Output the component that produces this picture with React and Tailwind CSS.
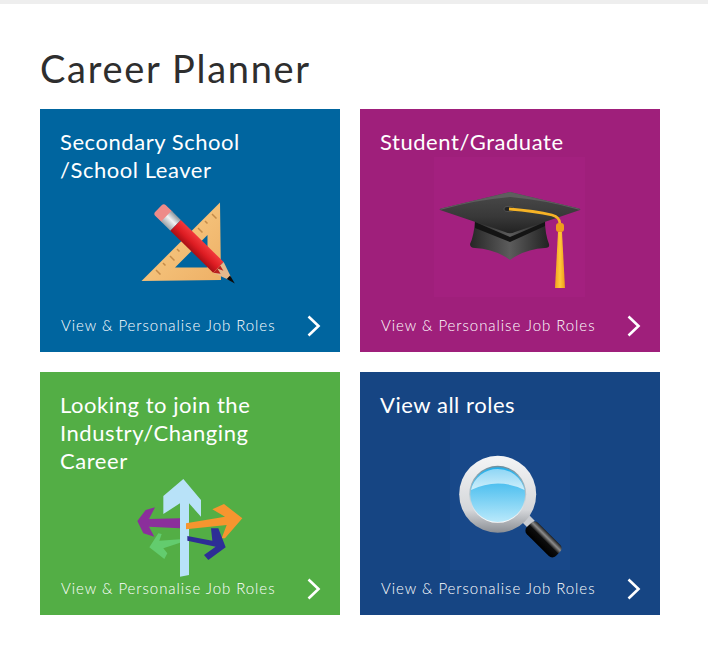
const TICKS = [0, 1, 2, 3, 4, 5, 6, 7, 8];

function PencilIcon() {
  return (
    <svg width="120" height="100" viewBox="0 0 120 100" className="shrink-0 mt-[6px]">
      <defs>
        <linearGradient id="ruler" x1="0" y1="0" x2="1" y2="1">
          <stop offset="0" stopColor="#f9d08a" />
          <stop offset="1" stopColor="#eeb066" />
        </linearGradient>
        <linearGradient id="ferrule" x1="0" y1="0" x2="0" y2="1">
          <stop offset="0" stopColor="#8f959b" />
          <stop offset="0.45" stopColor="#f2f3f4" />
          <stop offset="1" stopColor="#9aa0a5" />
        </linearGradient>
        <linearGradient id="pencilRed" x1="0" y1="0" x2="0" y2="1">
          <stop offset="0" stopColor="#f2393c" />
          <stop offset="0.55" stopColor="#dd1c22" />
          <stop offset="1" stopColor="#a80f16" />
        </linearGradient>
      </defs>
      <path
        fillRule="evenodd"
        fill="url(#ruler)"
        d="M90 12.5 L91 90 L11.5 91 Z M77.5 45 L77.5 77.5 L45 77.5 Z"
      />
      {TICKS.map((i) => (
        <line
          key={i}
          x1={82 - i * 7}
          y1={24 + i * 7}
          x2={82 - i * 7 + (i % 2 ? 2.5 : 4.5)}
          y2={24 + i * 7 + (i % 2 ? 2.5 : 4.5)}
          stroke="#c48b49"
          strokeWidth="1.5"
        />
      ))}
      <g transform="translate(28.5 18.5) rotate(44.5)">
        <rect x="0" y="-7.5" width="14" height="15" rx="3" fill="#ee8b89" />
        <rect x="11" y="-7.5" width="13" height="15" fill="url(#ferrule)" />
        <rect x="24" y="-7.5" width="60" height="15" fill="url(#pencilRed)" />
        <path d="M84 -7.5 L100 -1.8 L100 1.8 L84 7.5 Z" fill="#e3b98d" />
        <path d="M84 -7.5 L84 -2.5 L90 -1 L84 1.5 L90 3 L84 7.5 Z" fill="#b9201e" />
        <path d="M98 -2.4 L107 0 L98 2.4 Z" fill="#0b0b0b" />
      </g>
    </svg>
  );
}

function CapIcon() {
  return (
    <svg width="170" height="150" viewBox="0 0 170 150" className="shrink-0 mt-[-6px]">
      <defs>
        <linearGradient id="skull" x1="0" y1="0" x2="1" y2="0">
          <stop offset="0" stopColor="#262626" />
          <stop offset="0.5" stopColor="#5c5c5c" />
          <stop offset="1" stopColor="#222222" />
        </linearGradient>
        <linearGradient id="board" x1="0" y1="0" x2="0" y2="1">
          <stop offset="0" stopColor="#4a4a4a" />
          <stop offset="0.6" stopColor="#383838" />
          <stop offset="1" stopColor="#222222" />
        </linearGradient>
        <linearGradient id="tassel" x1="0" y1="0" x2="1" y2="0">
          <stop offset="0" stopColor="#f0a21e" />
          <stop offset="0.5" stopColor="#ffc83a" />
          <stop offset="1" stopColor="#ee9c18" />
        </linearGradient>
      </defs>
      <rect x="9" y="7" width="151" height="140" fill="#a3207f" />
      <path
        d="M50 70 Q49 86 45 94 Q45 98 50 98 Q70 99 85 110 Q100 99 120 98 Q125 98 124 94 Q120 84 120 70 Z"
        fill="url(#skull)"
      />
      <path d="M50 72 L85 87 L120 72 L120 76 L85 92 L50 78 Z" fill="#141414" />
      <path
        d="M15 60 Q14 59 16 58.5 L85 42 L154 58.5 Q156 59 155 60 L90 82 Q85 84.5 80 82 Z"
        fill="url(#board)"
      />
      <path d="M15 60 Q50 50 85 47 Q120 50 155 60 L154 58.5 L85 42 L16 58.5 Z" fill="#5e5e5e" />
      <ellipse cx="84" cy="59" rx="5" ry="2.6" fill="#222" stroke="#666" strokeWidth="0.6" />
      <path
        d="M84 59 Q110 61 127 65 Q135 67 135 74"
        stroke="#f6b326"
        strokeWidth="2.8"
        fill="none"
      />
      <rect x="131" y="73" width="8" height="9" rx="3" fill="#ef9d1c" />
      <path d="M133 82 L137 82 L140 138 L130 138 Z" fill="url(#tassel)" />
    </svg>
  );
}

function ArrowsIcon() {
  return (
    <svg width="130" height="115" viewBox="0 0 390 345" className="shrink-0 mt-[-5px]">
      <polygon
        points="165,208 103,212 110,192 100,190 73,232 118,267 127,250 115,235 165,218"
        fill="#63cc6e"
      />
      <polygon
        points="37,153 62,120 90,112 72,147 165,145 165,175 72,170 88,200 55,190"
        fill="#8b2f9b"
      />
      <polygon
        points="175,27 228,90 228,140 192,100 192,315 165,320 165,100 115,132 115,78"
        fill="#b8e2f8"
      />
      <polygon
        points="352,145 297,102 262,118 300,140 183,160 183,178 305,165 290,205 300,205"
        fill="#f7952f"
      />
      <polygon
        points="187,198 262,212 258,175 280,175 302,232 250,270 237,255 272,230 187,212"
        fill="#2d2e96"
      />
    </svg>
  );
}

function MagnifierIcon() {
  return (
    <svg width="130" height="160" viewBox="0 0 130 160" className="shrink-0 mt-[-4px]">
      <defs>
        <linearGradient id="rim" x1="0" y1="0" x2="0" y2="1">
          <stop offset="0" stopColor="#f4f5f6" />
          <stop offset="0.7" stopColor="#d5d7da" />
          <stop offset="1" stopColor="#8a8e94" />
        </linearGradient>
        <linearGradient id="lensRim" x1="0" y1="0" x2="0" y2="1">
          <stop offset="0" stopColor="#6d8f9e" />
          <stop offset="1" stopColor="#ffffff" />
        </linearGradient>
        <linearGradient id="lens" x1="0" y1="0" x2="0" y2="1">
          <stop offset="0" stopColor="#22aeea" />
          <stop offset="1" stopColor="#b9e9fb" />
        </linearGradient>
        <linearGradient id="gloss" x1="0" y1="0" x2="0" y2="1">
          <stop offset="0" stopColor="#8fd6f5" />
          <stop offset="1" stopColor="#cfeffb" />
        </linearGradient>
        <linearGradient id="handle" x1="0" y1="0" x2="0" y2="1">
          <stop offset="0" stopColor="#1c1c1c" />
          <stop offset="0.25" stopColor="#8d8d8d" />
          <stop offset="0.5" stopColor="#0c0c0c" />
          <stop offset="1" stopColor="#000000" />
        </linearGradient>
      </defs>
      <rect x="5" y="5" width="120" height="150" fill="#184889" />
      <rect x="76" y="100" width="12" height="10" transform="rotate(45 82 105)" fill="#c9ccd1" />
      <g transform="translate(84 110) rotate(45)">
        <rect x="0" y="-8" width="41" height="16" rx="5" fill="url(#handle)" />
      </g>
      <circle cx="52.7" cy="79.3" r="38.5" fill="url(#rim)" />
      <circle cx="52.7" cy="79.3" r="28.5" fill="url(#lensRim)" />
      <circle cx="52.7" cy="79.6" r="27.4" fill="url(#lens)" />
      <path d="M26 75 A27.5 27.5 0 0 1 79.5 75 Q53 62 26 75 Z" fill="url(#gloss)" />
    </svg>
  );
}

function CareerCard({ title, bg, children }) {
  return (
    <div className={`flex h-[243px] flex-col pt-[19px] ${bg}`}>
      <h2 className="px-5 text-[22px] leading-[28px] tracking-[0.55px] text-white">
        {title.map((line) => (
          <div key={line}>{line}</div>
        ))}
      </h2>
      <div className="flex min-h-0 flex-1 justify-center">{children}</div>
      <div className="mb-[15px] flex h-6 items-center justify-between pl-[21px] pr-[19px] text-white">
        <span className="text-[15px] font-light tracking-[0.95px]">View &amp; Personalise Job Roles</span>
        <svg width="14" height="22" viewBox="0 0 14 22" fill="none" className="mt-[1px]">
          <polyline points="1.5,1.5 11.5,11 1.5,20.5" stroke="white" strokeWidth="2.6" />
        </svg>
      </div>
    </div>
  );
}

export default function App() {
  return (
    <div className="min-h-[648px] bg-white font-['Lato',sans-serif]">
      <div className="h-1 bg-[#eeeeee]" />
      <div className="px-10">
        <h1 className="pb-[15px] pt-[39px] text-[38px] leading-[51px] tracking-[1.7px] text-[#2e2e2e]">
          Career Planner
        </h1>
        <div className="grid w-[620px] grid-cols-2 gap-5">
          <CareerCard title={['Secondary School', '/School Leaver']} bg="bg-[#00659f]">
            <PencilIcon />
          </CareerCard>
          <CareerCard title={['Student/Graduate']} bg="bg-[#9f1f7b]">
            <CapIcon />
          </CareerCard>
          <CareerCard title={['Looking to join the', 'Industry/Changing', 'Career']} bg="bg-[#53ae45]">
            <ArrowsIcon />
          </CareerCard>
          <CareerCard title={['View all roles']} bg="bg-[#164583]">
            <MagnifierIcon />
          </CareerCard>
        </div>
      </div>
    </div>
  );
}
